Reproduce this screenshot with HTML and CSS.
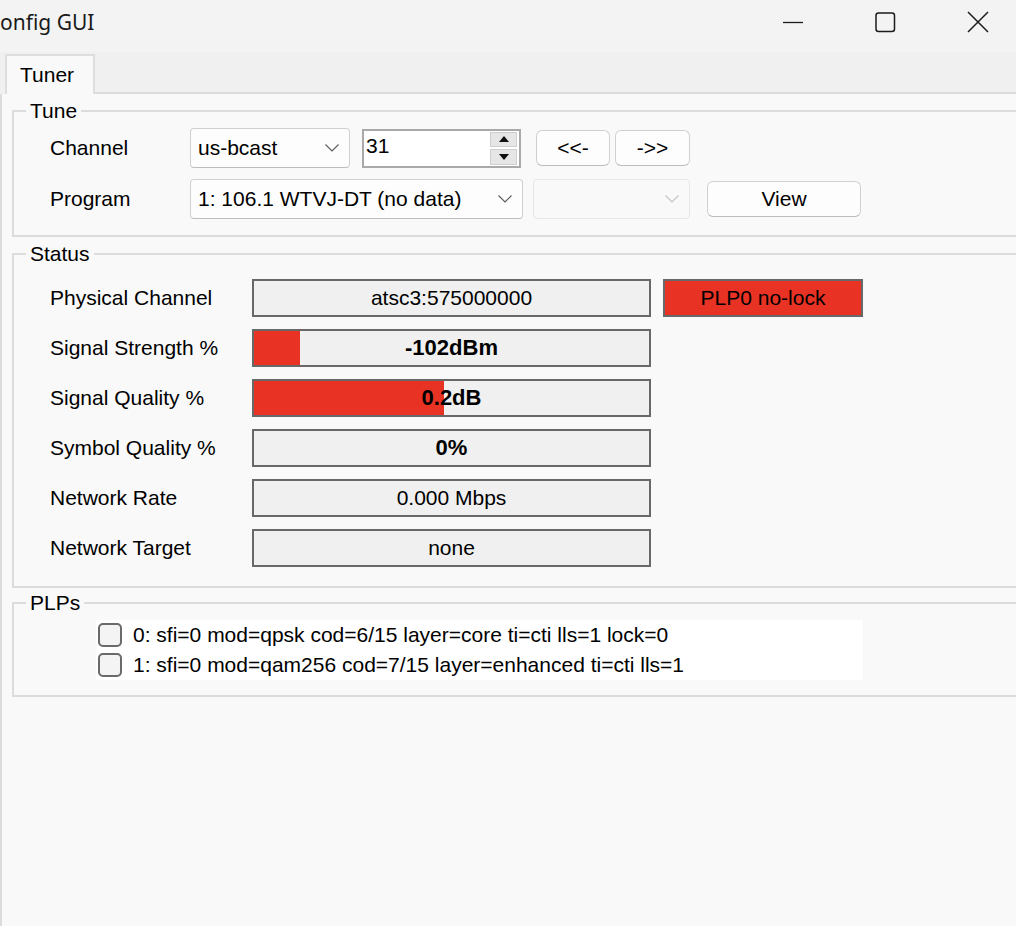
FILE: index.html
```html
<!DOCTYPE html>
<html lang="en">
<head>
    <meta charset="UTF-8">
    <meta name="viewport" content="width=device-width, initial-scale=1.0">
    <title>Config GUI</title>
    <link rel="stylesheet" href="styles.css">
</head>
<body>
    <div class="titlebar">
        <span class="title">onfig GUI</span>
        <div class="caption-buttons">
            <svg class="caption-icon" width="21" height="21" viewBox="0 0 21 21"><path d="M0 10.5h20" stroke="#1b1b1b" stroke-width="1.3"/></svg>
            <svg class="caption-icon" width="21" height="21" viewBox="0 0 21 21"><rect x="1" y="1" width="18.5" height="18.5" rx="2.5" fill="none" stroke="#1b1b1b" stroke-width="1.5"/></svg>
            <svg class="caption-icon" width="22" height="22" viewBox="0 0 22 22"><path d="M1 1L21 21M21 1L1 21" stroke="#1b1b1b" stroke-width="1.5"/></svg>
        </div>
    </div>

    <div class="tabstrip">
        <div class="tab">Tuner</div>
        <div class="tab-rest"></div>
    </div>

    <div class="tabpage">
        <!-- tune -->
        <fieldset class="group tune">
            <legend>Tune</legend>
            <div class="group-body">
                <div class="row tune-row">
                    <span class="label tune-label">Channel</span>
                    <div class="combo channel-combo">
                        <span>us-bcast</span>
                        <svg class="chevron" width="14" height="8" viewBox="0 0 14 8"><path d="M0.5 0.5L7 7L13.5 0.5" fill="none" stroke="#5a5a5a" stroke-width="1.1"/></svg>
                    </div>
                    <div class="spin">
                        <span class="spin-value">31</span>
                        <div class="spin-buttons">
                            <div class="spin-btn"><svg width="10" height="6" viewBox="0 0 10 6"><path d="M5 0L10 6H0z" fill="#111"/></svg></div>
                            <div class="spin-btn"><svg width="10" height="6" viewBox="0 0 10 6"><path d="M0 0H10L5 6z" fill="#111"/></svg></div>
                        </div>
                    </div>
                    <button class="btn step-btn prev-btn">&lt;&lt;-</button>
                    <button class="btn step-btn next-btn">-&gt;&gt;</button>
                </div>
                <div class="row tune-row">
                    <span class="label tune-label">Program</span>
                    <div class="combo program-combo">
                        <span>1: 106.1 WTVJ-DT (no data)</span>
                        <svg class="chevron" width="14" height="8" viewBox="0 0 14 8"><path d="M0.5 0.5L7 7L13.5 0.5" fill="none" stroke="#5a5a5a" stroke-width="1.1"/></svg>
                    </div>
                    <div class="combo disabled-combo">
                        <span></span>
                        <svg class="chevron" width="14" height="8" viewBox="0 0 14 8"><path d="M0.5 0.5L7 7L13.5 0.5" fill="none" stroke="#c4c4c4" stroke-width="1.1"/></svg>
                    </div>
                    <button class="btn view-btn">View</button>
                </div>
            </div>
        </fieldset>

        <!-- status -->
        <fieldset class="group status">
            <legend>Status</legend>
            <div class="group-body">
                <div class="row status-row">
                    <span class="label status-label">Physical Channel</span>
                    <div class="value-box"><span class="value-text">atsc3:575000000</span></div>
                    <div class="lock-box">PLP0 no-lock</div>
                </div>
                <div class="row status-row">
                    <span class="label status-label">Signal Strength %</span>
                    <div class="value-box"><div class="fill" style="width: 46px"></div><span class="value-text bold">-102dBm</span></div>
                </div>
                <div class="row status-row">
                    <span class="label status-label">Signal Quality %</span>
                    <div class="value-box"><div class="fill" style="width: 190px"></div><span class="value-text bold">0.2dB</span></div>
                </div>
                <div class="row status-row">
                    <span class="label status-label">Symbol Quality %</span>
                    <div class="value-box"><span class="value-text bold">0%</span></div>
                </div>
                <div class="row status-row">
                    <span class="label status-label">Network Rate</span>
                    <div class="value-box"><span class="value-text">0.000 Mbps</span></div>
                </div>
                <div class="row status-row">
                    <span class="label status-label">Network Target</span>
                    <div class="value-box"><span class="value-text">none</span></div>
                </div>
            </div>
        </fieldset>

        <!-- plps -->
        <fieldset class="group plps">
            <legend>PLPs</legend>
            <div class="group-body">
                <div class="plp-list">
                    <label class="plp-item"><input type="checkbox" class="check"><span>0: sfi=0 mod=qpsk cod=6/15 layer=core ti=cti lls=1 lock=0</span></label>
                    <label class="plp-item"><input type="checkbox" class="check"><span>1: sfi=0 mod=qam256 cod=7/15 layer=enhanced ti=cti lls=1</span></label>
                </div>
            </div>
        </fieldset>
    </div>
</body>
</html>
```

FILE: styles.css
```css
*{
    box-sizing: border-box;
    margin: 0;
    padding: 0;
}
body{
    width: 1016px;
    height: 926px;
    overflow: hidden;
    background-color: #f9f9f9;
    font-family: "Liberation Sans", Arial, sans-serif;
    font-size: 21px;
    color: #000;
}

/* window chrome */
.titlebar{
    height: 52px;
    background-color: #f3f3f3;
    display: flex;
    justify-content: space-between;
    align-items: flex-start;
}
.title{
    font-family: "Noto Sans", sans-serif;
    font-size: 21px;
    line-height: 44px;
    color: #1a1a1a;
}
.caption-buttons{
    height: 44px;
    display: flex;
    align-items: center;
    gap: 71px;
    padding-right: 27px;
}
.caption-icon{
    display: block;
}

/* tabs */
.tabstrip{
    height: 42px;
    display: flex;
    background-color: #f0f0f0;
    padding-left: 5px;
}
.tab{
    width: 90px;
    margin-top: 2px;
    padding-left: 13px;
    border: 2px solid #dedede;
    border-bottom: none;
    background-color: #f9f9f9;
    line-height: 38px;
}
.tab-rest{
    flex: 1;
    border-bottom: 2px solid #dcdcdc;
}
.tabpage{
    height: 832px;
    border-left: 2px solid #dcdcdc;
    padding: 5px 0 0 10px;
    background-color: #f9f9f9;
}

/* group boxes */
.group{
    border: 2px solid #dcdcdc;
    margin-right: -40px;
    padding-left: 12px;
    min-width: 0;
}
.group legend{
    padding: 0 4px;
    line-height: 24px;
}
.group-body{
    padding-left: 24px;
    display: flex;
    flex-direction: column;
}
.tune{
    padding-top: 5px;
    padding-bottom: 16px;
}
.tune .group-body{
    gap: 11px;
}
.status{
    margin-top: 5px;
    padding-top: 13px;
    padding-bottom: 19px;
}
.status .group-body{
    gap: 12px;
}
.plps{
    margin-top: 3px;
    padding-top: 5px;
    padding-bottom: 15px;
}

.row{
    display: flex;
    align-items: center;
}
.tune-row{
    height: 40px;
}
.status-row{
    height: 38px;
}
.label{
    flex-shrink: 0;
}
.tune-label{
    width: 140px;
}
.status-label{
    width: 202px;
}

/* combos, spin, buttons */
.combo{
    height: 40px;
    display: flex;
    align-items: center;
    justify-content: space-between;
    padding: 0 10px 0 7px;
    border: 1px solid #d0d0d0;
    border-bottom-color: #bdbdbd;
    border-radius: 4px;
    background-color: #fdfdfd;
}
.chevron{
    display: block;
}
.channel-combo{
    width: 160px;
}
.program-combo{
    width: 333px;
}
.disabled-combo{
    width: 157px;
    margin-left: 10px;
    border-color: #e6e6e6;
    background-color: #f9f9f9;
}
.spin{
    width: 159px;
    height: 39px;
    margin-left: 12px;
    display: flex;
    justify-content: space-between;
    border: 2px solid #a9a9a9;
    background-color: #fff;
}
.spin-value{
    padding: 4px 0 0 2px;
    line-height: 22px;
}
.spin-buttons{
    width: 29px;
    padding: 1px 2px 1px 0;
    display: flex;
    flex-direction: column;
    gap: 2px;
}
.spin-btn{
    flex: 1;
    display: flex;
    align-items: center;
    justify-content: center;
    background-color: #e6e6e6;
    border: 1px solid #cfcfcf;
}
.spin-btn svg{
    display: block;
}
.btn{
    height: 36px;
    font-family: inherit;
    font-size: 21px;
    color: #000;
    border: 1px solid #d0d0d0;
    border-bottom-color: #bcbcbc;
    border-radius: 6px;
    background-color: #fdfdfd;
}
.step-btn{
    width: 74px;
}
.prev-btn{
    margin-left: 15px;
}
.next-btn{
    width: 75px;
    margin-left: 5px;
}
.view-btn{
    width: 154px;
    margin-left: 17px;
}

/* status boxes */
.value-box{
    position: relative;
    width: 399px;
    height: 38px;
    border: 2px solid #686868;
    background-color: #f0f0f0;
    display: flex;
    align-items: center;
    justify-content: center;
}
.fill{
    position: absolute;
    left: 0;
    top: 0;
    bottom: 0;
    background-color: #e83324;
}
.value-text{
    position: relative;
}
.bold{
    font-weight: 700;
    font-size: 22px;
}
.lock-box{
    width: 200px;
    height: 38px;
    margin-left: 12px;
    border: 2px solid #686868;
    background-color: #e83324;
    display: flex;
    align-items: center;
    justify-content: center;
}

/* plp list */
.plp-list{
    width: 767px;
    height: 60px;
    margin-left: 46px;
    padding-left: 2px;
    background-color: #fff;
}
.plp-item{
    height: 30px;
    display: flex;
    align-items: center;
    gap: 11px;
}
.check{
    appearance: none;
    width: 24px;
    height: 24px;
    border: 2px solid #6a6a6a;
    border-radius: 5px;
    background-color: #f4f4f4;
    flex-shrink: 0;
}
```
